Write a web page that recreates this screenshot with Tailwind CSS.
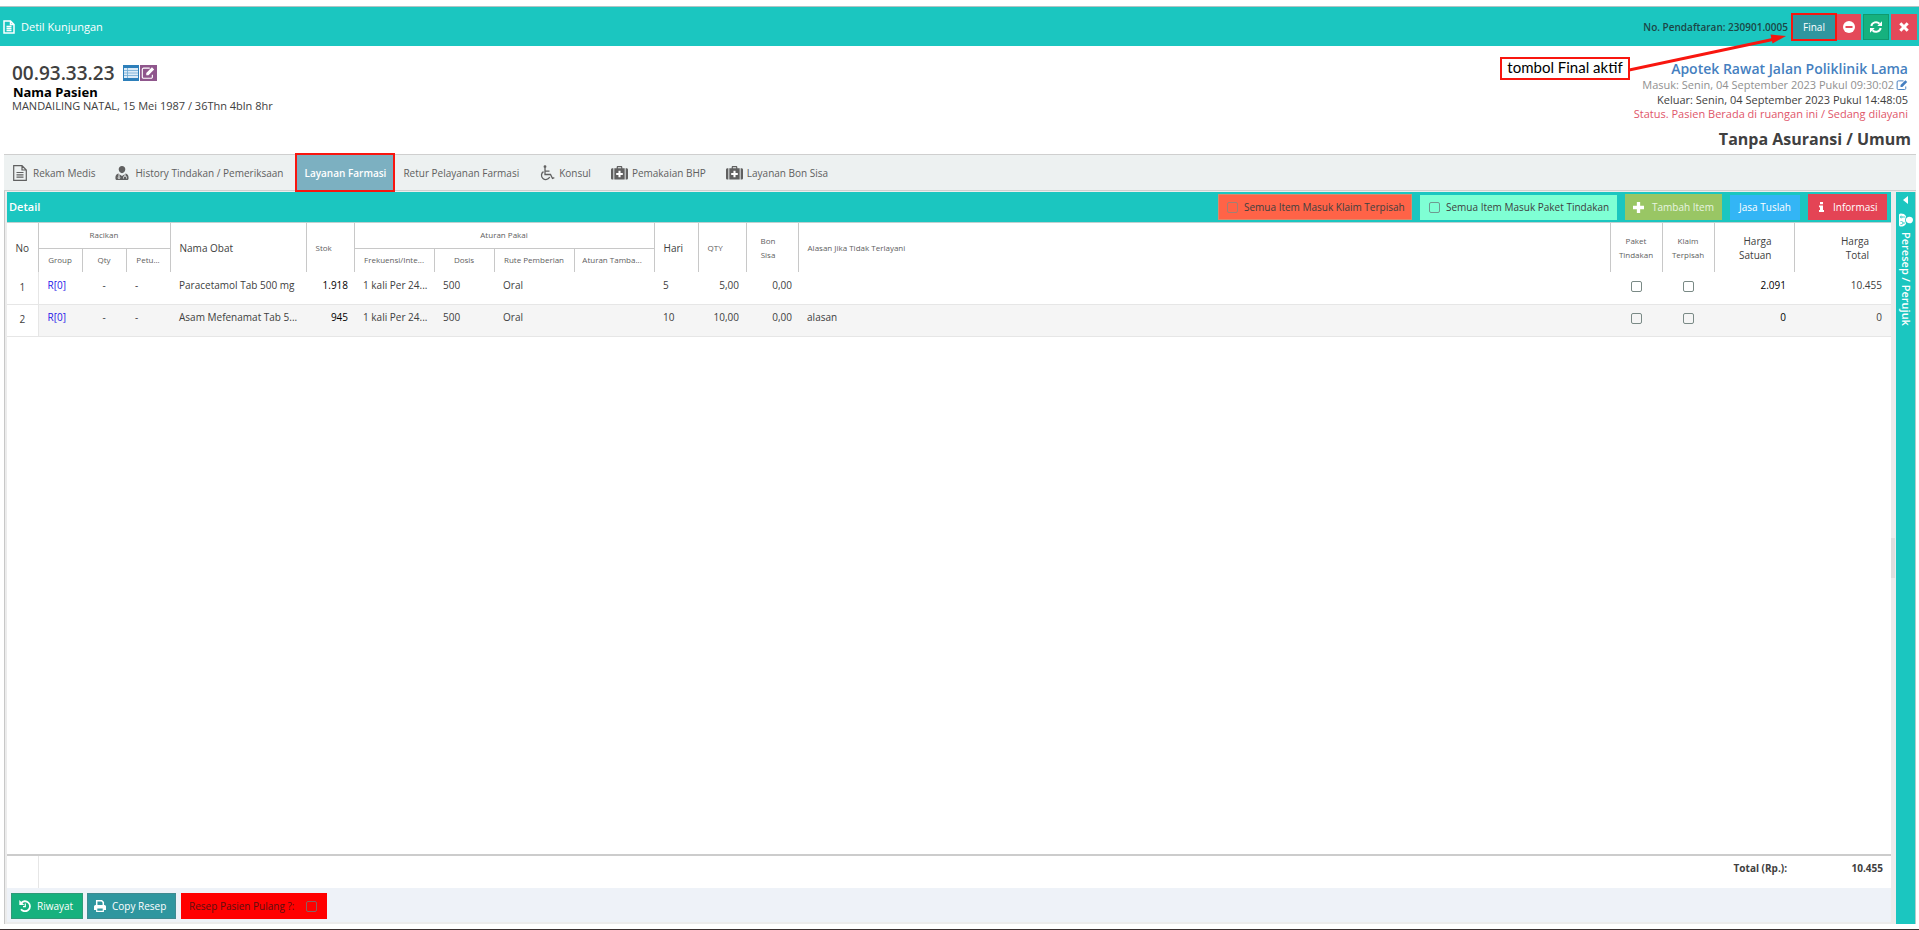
<!DOCTYPE html>
<html lang="id">
<head>
<meta charset="utf-8">
<title>Detil Kunjungan</title>
<script src="https://cdn.jsdelivr.net/npm/@tailwindcss/browser@4"></script>
</head>
<body class="bg-white font-['Open_Sans',sans-serif] text-[10px] leading-4 text-[#404040]">
<svg class="hidden">
  <symbol id="i-file" viewBox="0 0 14 16"><path d="M.7.700h8.300l4.300 4.300v10.300H.7z M9 .7V5h4.300 M3.500 7.500h7 M3.500 9.800h7 M3.500 12.100h7" fill="none" stroke="currentColor" stroke-width="1.200"/></symbol>
  <symbol id="i-doctor" viewBox="0 0 14 16"><path d="M7 1a3.300 3.300 0 0 1 3.300 3.600C10.100 6.600 8.700 8.200 7 8.200S3.900 6.600 3.700 4.600A3.300 3.300 0 0 1 7 1z M3.200 8.500 7 11l3.800-2.500C13 9 13.600 11 13.600 13.200c0 1.300-.8 1.800-1.800 1.800H2.200C1.200 15 .4 14.500.4 13.200.4 11 1 9 3.200 8.500z" fill="currentColor"/><path d="M4 9v3 M10 9v2 M8.500 13.500v-1a1.500 1.500 0 0 1 3 0v1" fill="none" stroke="#edf1f1" stroke-width=".9"/><circle cx="4" cy="12.800" r=".9" fill="none" stroke="#edf1f1" stroke-width=".8"/></symbol>
  <symbol id="i-doctor-side" viewBox="0 0 14 16"><path d="M7 1a3.300 3.300 0 0 1 3.300 3.600C10.100 6.600 8.700 8.200 7 8.200S3.900 6.600 3.700 4.600A3.300 3.300 0 0 1 7 1z M3.200 8 7 9l3.800-1C13 9 13.600 11 13.600 13.200c0 1.300-.8 1.800-1.800 1.800H2.200C1.200 15 .4 14.500.4 13.200.4 11 1 9 3.200 8z" fill="currentColor"/><path d="M4 9v3 M10 9v2 M8.500 13.500v-1a1.500 1.500 0 0 1 3 0v1" fill="none" stroke="#1bc6c0" stroke-width=".8"/><circle cx="4" cy="12.800" r=".9" fill="none" stroke="#1bc6c0" stroke-width=".8"/></symbol>
  <symbol id="i-chair" viewBox="0 0 16 16"><g fill="none" stroke="currentColor" stroke-width="1.300"><path d="M6 3v6.500h5.500l2 4 1.800-.8 M6 6.200h4.500 M4.500 6.600a4.300 4.300 0 1 0 6.200 5.400"/></g><circle cx="6" cy="1.700" r="1.400" fill="currentColor"/></symbol>
  <symbol id="i-medkit" viewBox="0 0 18 16"><path d="M6 3V1.800C6 1 6.500.6 7.200.6h3.600c.7 0 1.200.4 1.200 1.200V3h2.500v12h-11V3z M7.300 3h3.400V1.800H7.300z M0 4.500C0 3.600.7 3 1.500 3h1v12h-1C.7 15 0 14.400 0 13.500z M15.500 3h1c.8 0 1.500.6 1.500 1.500v9c0 .9-.7 1.500-1.500 1.500h-1z" fill="currentColor" fill-rule="evenodd"/><path d="M7.900 5.500h2.200v2.400h2.400v2.200h-2.400v2.400H7.900v-2.400H5.500V7.900h2.400z" fill="#fff"/></symbol>
  <symbol id="i-edit" viewBox="0 0 16 16"><path d="M10 2.500H3A1.500 1.500 0 0 0 1.500 4v8.500A1.500 1.500 0 0 0 3 14h8.500a1.500 1.500 0 0 0 1.500-1.500V10" fill="none" stroke="currentColor" stroke-width="1.300"/><path d="M6 8 12.500 1.500 15 4 8.500 10.500H6z" fill="currentColor"/></symbol>
</svg>

<div class="relative flex h-screen flex-col overflow-hidden pt-1.5">
  <header class="flex h-10 shrink-0 items-center border-t border-[#b0c4c4] bg-[#1bc6c0] pl-[3px] pr-0.5">
    <svg class="h-[14px] w-3 text-white" viewBox="0 0 12 14"><path d="M1 1h6.500L11 4.500V13H1z M7.500 1v3.500H11 M3.500 6.500h5 M3.500 8.500h5 M3.500 10.500h5" fill="none" stroke="currentColor" stroke-width="1.500"/></svg>
    <h1 class="ml-1.5 flex-1 text-[11px] font-medium text-white">Detil Kunjungan</h1>
    <span class="text-[10px] font-semibold text-[#1c4746]">No. Pendaftaran: 230901.0005</span>
    <button class="ml-[3px] h-7 w-[46px] border-2 border-[#f8160f] bg-[#2f969f] text-white">Final</button>
    <button aria-label="Tutup kunjungan" class="flex h-[26px] w-6 items-center justify-center bg-[#e44959]"><svg class="size-3" viewBox="0 0 12 12"><circle cx="6" cy="6" r="6" fill="#fff"/><path d="M2.500 5h7v2h-7z" fill="#e44959"/></svg></button>
    <button aria-label="Muat ulang" class="ml-0.5 flex h-[26px] w-[26px] items-center justify-center border border-[#0f9a6e] bg-[#16b17e]"><svg class="size-3" viewBox="0 0 12 12"><path d="M1.300 5A4.800 4.800 0 0 1 9.500 2.700 M10.700 7A4.800 4.800 0 0 1 2.500 9.300" fill="none" stroke="#fff" stroke-width="2"/><path d="M12 .3V5H7.300z M0 11.700V7h4.700z" fill="#fff"/></svg></button>
    <button aria-label="Tutup" class="ml-0.5 flex h-[26px] w-[26px] items-center justify-center bg-[#e44959]"><svg class="size-2.5" viewBox="0 0 10 10"><path d="M1.300 1.300l7.400 7.400 M8.700 1.300 1.300 8.700" stroke="#fff" stroke-width="3"/></svg></button>
  </header>

  <section class="flex h-[108px] shrink-0 justify-between pl-3 pr-2">
    <div class="pt-[15px]">
      <div class="flex h-6 items-center">
        <span class="text-[19px] font-semibold leading-6">00.93.33.23</span>
        <button aria-label="Daftar" class="ml-2 flex size-4 items-center justify-center bg-[#2d7fba]"><svg class="size-3.5" viewBox="0 0 14 14"><path d="M0 2h14v10H0z" fill="#dcebf7"/><path d="M0 4.500h14 M0 7h14 M0 9.500h14 M3.500 2v10" stroke="#6fa9d4" stroke-width=".8"/></svg></button>
        <button aria-label="Ubah" class="ml-px flex h-4 w-[17px] items-center justify-center bg-[#8f568c] text-white"><svg class="size-3.5"><use href="#i-edit"/></svg></button>
      </div>
      <div class="pl-px font-['Noto_Sans','Open_Sans',sans-serif] text-[13px] font-bold leading-[14px] text-black">Nama Pasien</div>
      <div class="text-[11px] leading-[14px]">MANDAILING NATAL, 15 Mei 1987 / 36Thn 4bln 8hr</div>
    </div>
    <div class="pt-[15px] text-right">
      <div class="pr-[3px]">
        <div class="text-[14px] font-semibold leading-4 text-[#457fc0]">Apotek Rawat Jalan Poliklinik Lama</div>
        <div class="flex items-center justify-end gap-0.5 text-[11px] leading-[15px] text-[#909090]">Masuk: Senin, 04 September 2023 Pukul 09:30:02 <svg class="size-3 text-[#457fc0]"><use href="#i-edit"/></svg></div>
        <div class="text-[11px] leading-[15px]">Keluar: Senin, 04 September 2023 Pukul 14:48:05</div>
        <div class="text-[11px] leading-[14px] text-[#e0566a]">Status. Pasien Berada di ruangan ini / Sedang dilayani</div>
      </div>
      <div class="mt-1.5 text-[16px] font-bold leading-6">Tanpa Asuransi / Umum</div>
    </div>
  </section>

  <nav class="ml-1 mr-[3px] flex h-[37px] shrink-0 items-stretch border-y border-[#cfcfcf] bg-[#edf1f1] pl-[9px] text-[#606060]">
    <button class="flex items-center gap-1.5"><svg class="h-4 w-3.5"><use href="#i-file"/></svg>Rekam Medis</button>
    <button class="ml-5 flex items-center gap-1.5"><svg class="h-4 w-3.5"><use href="#i-doctor"/></svg>History Tindakan / Pemeriksaan</button>
    <button class="relative z-10 -my-0.5 ml-3 border-2 border-[#f8160f] bg-[#7cb0c1] px-[7px] font-semibold text-white">Layanan Farmasi</button>
    <button class="ml-2">Retur Pelayanan Farmasi</button>
    <button class="ml-5 flex items-center gap-1"><svg class="size-4"><use href="#i-chair"/></svg>Konsul</button>
    <button class="ml-5 flex items-center gap-1"><svg class="h-4 w-[17px]"><use href="#i-medkit"/></svg>Pemakaian BHP</button>
    <button class="ml-5 flex items-center gap-1"><svg class="h-4 w-[17px]"><use href="#i-medkit"/></svg>Layanan Bon Sisa</button>
  </nav>

  <div class="ml-1 mr-[3px] flex min-h-0 flex-1 border-l border-[#c8c8c8] bg-[#ececec] pl-0.5 pt-px">
    <main class="mb-0.5 flex min-w-0 flex-1 flex-col bg-white">
      <div class="flex h-[31px] shrink-0 items-center whitespace-nowrap border-b border-[#c0d0d0] bg-[#1bc6c0] pl-0.5 pr-1">
        <h2 class="flex-1 text-[11px] font-semibold text-white">Detail</h2>
        <label class="flex h-[26px] w-[194px] items-center border border-[#d98a6c] bg-[#ff6347] pl-2"><input type="checkbox" class="size-[11px] appearance-none rounded-xs border border-[#a08074]"><span class="ml-1.5">Semua Item Masuk Klaim Terpisah</span></label>
        <label class="ml-2 flex h-[25px] w-[197px] items-center bg-[#7fffd4] pl-[9px]"><input type="checkbox" class="size-[11px] appearance-none rounded-xs border border-[#6f9a90]"><span class="ml-1.5">Semua Item Masuk Paket Tindakan</span></label>
        <button class="ml-2 flex h-[26px] w-[97px] items-center bg-[#99c664] pl-2 text-[#e8f4e0]"><svg class="size-[11px]" viewBox="0 0 10 10"><path d="M3.500 0h3v3.500H10v3H6.500V10h-3V6.500H0v-3h3.500z" fill="#fff"/></svg><span class="ml-2">Tambah Item</span></button>
        <button class="ml-2 h-[25px] w-[70px] bg-[#33b5f5] text-white">Jasa Tuslah</button>
        <button class="ml-2 flex h-[26px] w-[79px] items-center bg-[#e44455] pl-2.5 text-white"><svg class="h-2.5 w-[7px]" viewBox="0 0 7 10"><path d="M2 0h3v2.200H2z M1 3.500h4V8h1v2H1V8h1V5.300H1z" fill="#fff"/></svg><span class="ml-2">Informasi</span></button>
      </div>

      <table class="w-full table-fixed border-collapse">
        <colgroup>
          <col class="w-[31px]"><col class="w-11"><col class="w-11"><col class="w-11"><col class="w-[136px]"><col class="w-12"><col class="w-20"><col class="w-[60px]"><col class="w-20"><col class="w-20"><col class="w-11"><col class="w-12"><col class="w-[52px]"><col><col class="w-[52px]"><col class="w-[52px]"><col class="w-20"><col class="w-[97px]">
        </colgroup>
        <thead class="text-[8px] leading-[14px] text-[#606060] [&_th]:font-normal [&_th]:border-[#c8c8c8]">
          <tr class="h-[25px]">
            <th rowspan="2" class="border-r text-[10px] text-[#404040]">No</th>
            <th colspan="3" class="border-b border-r">Racikan</th>
            <th rowspan="2" class="border-r pl-[9px] text-left text-[10px] text-[#404040]">Nama Obat</th>
            <th rowspan="2" class="border-r pl-[9px] text-left">Stok</th>
            <th colspan="4" class="border-b border-r">Aturan Pakai</th>
            <th rowspan="2" class="border-r pl-[9px] text-left text-[10px] text-[#404040]">Hari</th>
            <th rowspan="2" class="border-r pl-[9px] text-left">QTY</th>
            <th rowspan="2" class="border-r pr-2">Bon<br>Sisa</th>
            <th rowspan="2" class="border-r pl-[9px] text-left">Alasan Jika Tidak Terlayani</th>
            <th rowspan="2" class="border-r">Paket<br>Tindakan</th>
            <th rowspan="2" class="border-r">Klaim<br>Terpisah</th>
            <th rowspan="2" class="border-r pr-[22px] text-right text-[10px] text-[#404040]">Harga<br>Satuan</th>
            <th rowspan="2" class="pr-[22px] text-right text-[10px] text-[#404040]">Harga<br>Total</th>
          </tr>
          <tr class="h-6">
            <th class="border-r">Group</th><th class="border-r">Qty</th><th class="border-r">Petu...</th>
            <th class="border-r">Frekuensi/Inte...</th><th class="border-r">Dosis</th><th class="border-r">Rute Pemberian</th><th class="border-r pr-1">Aturan Tamba...</th>
          </tr>
        </thead>
        <tbody class="[&_td]:whitespace-nowrap [&_td]:px-[9px] [&_td]:pb-1.5 [&_tr]:h-8 [&_tr]:border-b [&_tr]:border-[#e6e6e6]">
          <tr>
            <td class="border-r border-[#e6e6e6] text-center !pb-0.5">1</td><td class="text-[#2a20e8]">R[0]</td><td class="text-center">-</td><td>-</td>
            <td>Paracetamol Tab 500 mg</td><td class="!px-1.5 text-right text-black">1.918</td><td>1 kali Per 24...</td><td>500</td><td>Oral</td><td></td>
            <td>5</td><td class="!px-[7px] text-right">5,00</td><td class="!px-1.5 text-right">0,00</td><td></td>
            <td class="text-center"><input type="checkbox" aria-label="Paket tindakan 1" class="size-[11px] appearance-none rounded-xs border border-[#7a8a86] align-middle"></td>
            <td class="text-center"><input type="checkbox" aria-label="Klaim terpisah 1" class="size-[11px] appearance-none rounded-xs border border-[#7a8a86] align-middle"></td>
            <td class="!px-2 text-right text-black">2.091</td><td class="text-right">10.455</td>
          </tr>
          <tr class="bg-[#f5f5f5]">
            <td class="border-r border-[#e6e6e6] bg-white text-center !pb-0.5">2</td><td class="text-[#2a20e8]">R[0]</td><td class="text-center">-</td><td>-</td>
            <td>Asam Mefenamat Tab 5...</td><td class="!px-1.5 text-right text-black">945</td><td>1 kali Per 24...</td><td>500</td><td>Oral</td><td></td>
            <td>10</td><td class="!px-[7px] text-right">10,00</td><td class="!px-1.5 text-right">0,00</td><td>alasan</td>
            <td class="text-center"><input type="checkbox" aria-label="Paket tindakan 2" class="size-[11px] appearance-none rounded-xs border border-[#7a8a86] align-middle"></td>
            <td class="text-center"><input type="checkbox" aria-label="Klaim terpisah 2" class="size-[11px] appearance-none rounded-xs border border-[#7a8a86] align-middle"></td>
            <td class="!px-2 text-right text-black">0</td><td class="text-right">0</td>
          </tr>
        </tbody>
      </table>

      <div class="mt-auto flex h-[34px] shrink-0 border-t-2 border-[#cccccc] font-bold">
        <div class="w-8 border-r border-[#e6e6e6]"></div>
        <div class="flex-1 pr-2 pt-1 text-right">Total (Rp.):</div>
        <div class="w-24 pr-2 pt-1 text-right">10.455</div>
      </div>
      <footer class="flex h-[34px] shrink-0 items-center whitespace-nowrap bg-[#eef2f8] pl-1 pt-0.5 text-white">
        <button class="flex h-[26px] w-[72px] items-center border border-[#2f9a78] bg-[#16b17e] pl-[7px]"><svg class="size-3" viewBox="0 0 12 12"><path d="M2 3.200A5 5 0 1 1 2 9.300" fill="none" stroke="#fff" stroke-width="1.800"/><path d="M.3 0v5h5z" fill="#fff"/><path d="M6.300 3.500v3.200H4" fill="none" stroke="#fff" stroke-width="1.200"/></svg><span class="ml-1.5">Riwayat</span></button>
        <button class="ml-1 flex h-[26px] w-[89px] items-center border border-[#3f8a90] bg-[#2f969f] pl-1.5"><svg class="size-3" viewBox="0 0 12 12"><path d="M2.700 5.500V.8h5L9.300 2.400v3.100" fill="none" stroke="#fff" stroke-width="1.500"/><path d="M1.500 5h9A1.500 1.500 0 0 1 12 6.500V10H0V6.500A1.500 1.500 0 0 1 1.500 5z" fill="#fff"/><path d="M2.700 8h6.600v3.300H2.700z" fill="#2f969f" stroke="#fff" stroke-width="1.200"/></svg><span class="ml-1.5">Copy Resep</span></button>
        <label class="ml-[5px] flex h-[26px] w-[146px] items-center bg-[#ff0000] pl-2 text-[#5c1010]">Resep Pasien Pulang ?:<input type="checkbox" class="ml-auto mr-2.5 size-[11px] appearance-none rounded-xs border border-[#8a6060]"></label>
      </footer>
    </main>
    <div class="flex w-[5px] shrink-0 items-center"><div class="h-10 w-1 bg-[#dedede]"></div></div>
    <aside class="flex w-5 shrink-0 flex-col items-center border-r border-[#b5cccc] bg-[#1bc6c0] text-white">
      <svg class="mt-1 h-2 w-[5px]" viewBox="0 0 5 8"><path d="M5 0v8L0 4z" fill="#fff"/></svg>
      <svg class="mt-2 h-4 w-3.5 rotate-90"><use href="#i-doctor-side"/></svg>
      <span class="mt-1 text-[11px] font-semibold [writing-mode:vertical-rl]">Peresep / Perujuk</span>
    </aside>
  </div>
  <div class="h-[5px] shrink-0 bg-white"></div>
  <div class="h-px shrink-0 bg-[#3a3030]"></div>

  <div class="absolute right-[289px] top-[57px] flex h-[23px] w-[130px] items-center justify-center border-2 border-[#f8160f] bg-white pb-1 font-[Lato,'Open_Sans',sans-serif] text-[15px] text-black">tombol Final aktif</div>
  <svg class="pointer-events-none absolute right-[132px] top-[33px] h-10 w-[158px]" viewBox="0 0 158 40"><path d="M0 37 146 6" stroke="#f8160f" stroke-width="3"/><path d="M157 3 141.500 1.500 143.500 10.500z" fill="#f8160f"/></svg>
</div>
</body>
</html>
